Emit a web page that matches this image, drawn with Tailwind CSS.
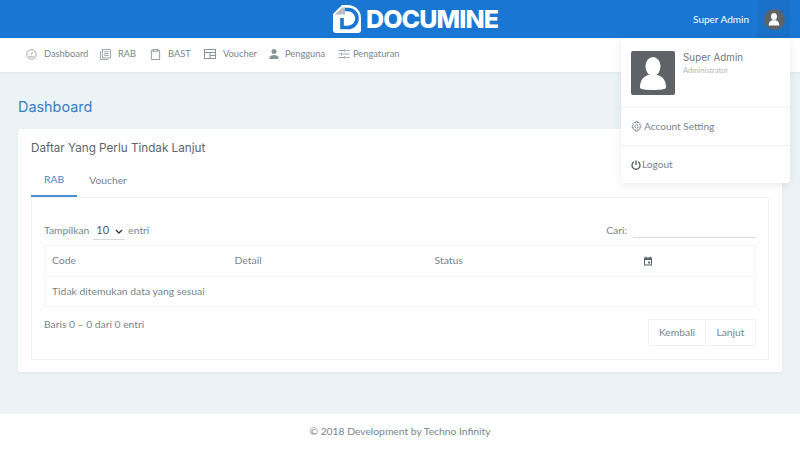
<!DOCTYPE html>
<html lang="en">
  <head>
    <meta charset="UTF-8" />
    <meta name="viewport" content="width=device-width, initial-scale=1.0" />
    <title>Documine</title>
    <script src="https://cdn.jsdelivr.net/npm/@tailwindcss/browser@4"></script>
  </head>
  <body class="font-['Lato',sans-serif] bg-[#ecf3f7] text-[#78858c]">
    <div class="relative w-[800px] h-[450px] overflow-hidden flex flex-col">
      <!-- Header -->
      <header class="h-[38px] shrink-0 bg-[#1976d2] flex items-center relative">
        <div class="absolute left-[333px] top-[5px] flex items-center gap-[5px]">
          <svg class="w-[28px] h-[28px]" viewBox="0 0 28 28">
            <path d="M9 0H15A13 13 0 0 1 28 13V25a3 3 0 0 1-3 3H3a3 3 0 0 1-3-3V9z" fill="#fff" />
            <path d="M9.500 2 2 9.500H9.500z" fill="#b5b8bc" />
            <path d="M11 4.500h4A9 9 0 0 1 15 22.500H9V13" fill="none" stroke="#1976d2" stroke-width="3.600" />
            <path d="M9.500 2.500H12V9.500H9.500z" fill="#b5b8bc" />
          </svg>
          <span class="font-['Inter',sans-serif] font-extrabold text-[25px] leading-[28px] text-white tracking-[-0.9px]">DOCUMINE</span>
        </div>
        <div class="ml-auto flex items-center h-full">
          <span class="text-white text-[10px] mr-[9px]">Super Admin</span>
          <div class="w-[32px] h-full bg-[#1a6fc6] flex items-center justify-center mr-[10px]">
            <div class="w-[21px] h-[21px] rounded-full bg-[#5f6368] flex items-center justify-center overflow-hidden">
              <svg class="w-[14px] h-[14px]" viewBox="0 0 24 24" fill="#fff">
                <ellipse cx="12" cy="7.500" rx="5" ry="6" />
                <path d="M3 23c0-6 3-8 6-9h6c3 1 6 3 6 9z" />
              </svg>
            </div>
          </div>
        </div>
      </header>

      <!-- Nav -->
      <nav class="h-[34px] shrink-0 bg-white shadow-[0_1px_3px_rgba(0,0,0,0.06)] flex items-center pl-[26px] pb-[2px] text-[9.300px] text-[#78858c]">
        <a class="flex items-center gap-[7px] w-[74px]">
          <svg class="w-[11px] h-[11px] shrink-0" viewBox="0 0 12 12" fill="none" stroke="#8a959b" stroke-width="0.900">
            <circle cx="6" cy="6" r="5.200" />
            <path d="M6 6.500 7 3M3 8.500h6" />
          </svg>
          Dashboard
        </a>
        <a class="flex items-center gap-[7px] w-[50px]">
          <svg class="w-[11px] h-[11px] shrink-0" viewBox="0 0 12 12" fill="none" stroke="#8a959b" stroke-width="0.900">
            <rect x="2.500" y="0.700" width="9" height="9" />
            <path d="M0.500 2.500v9h9M4.500 3h5M4.500 5h5M4.500 7h5" />
          </svg>
          RAB
        </a>
        <a class="flex items-center gap-[7px] w-[54px]">
          <svg class="w-[11px] h-[11px] shrink-0" viewBox="0 0 12 12" fill="none" stroke="#8a959b" stroke-width="1">
            <path d="M3.500 1.500H1.500v10h9v-10H8.500" />
            <rect x="3.500" y="0.500" width="5" height="2" />
          </svg>
          BAST
        </a>
        <a class="flex items-center gap-[7px] w-[64px]">
          <svg class="w-[12px] h-[12px] shrink-0" viewBox="0 0 12 12" fill="none" stroke="#8a959b" stroke-width="1">
            <rect x="0.500" y="1.500" width="11" height="9" />
            <path d="M0.500 4.500h11M6 4.500v6M6 7.500h5.500" />
          </svg>
          Voucher
        </a>
        <a class="flex items-center gap-[5px] w-[70px]">
          <svg class="w-[12px] h-[12px] shrink-0" viewBox="0 0 12 12" fill="#8a959b">
            <circle cx="6" cy="3.500" r="2.500" />
            <path d="M1.500 11V9.500C1.500 8 4 7 6 7s4.500 1 4.500 2.500V11z" />
          </svg>
          Pengguna
        </a>
        <a class="flex items-center gap-[3px]">
          <svg class="w-[12px] h-[12px] shrink-0" viewBox="0 0 12 12" fill="none" stroke="#8a959b" stroke-width="0.900">
            <path d="M0.500 2.500h6M8.500 2.500h3M7 1v3M0.500 6h2M4.500 6h7M3.500 4.500v3M0.500 9.500h6M8.500 9.500h3M7 8v3" />
          </svg>
          Pengaturan
        </a>
      </nav>

      <!-- Content -->
      <main class="flex-1 px-[18px] pt-[27px]">
        <h1 class="font-['Inter',sans-serif] text-[14.400px] leading-[16px] text-[#3a7dc2] mb-[14px]">Dashboard</h1>
        <section class="bg-white rounded-[2px] shadow-[0_1px_3px_rgba(0,0,0,0.05)] px-[13px] pt-[12px] pb-[12px] h-[243px] flex flex-col">
          <h2 class="font-['Inter',sans-serif] text-[11.700px] leading-[14px] text-[#5a666d]">Daftar Yang Perlu Tindak Lanjut</h2>
          <div class="flex mt-[9px] h-[33px] text-[10.300px]">
            <a class="w-[46px] flex items-center justify-center text-[#4a86c5] border-b-2 border-[#4a90d6] h-[33px]">RAB</a>
            <a class="w-[62px] flex items-center justify-center">Voucher</a>
          </div>
          <div class="border border-[#f0f2f4] flex-1 px-[12px] pt-[22px]">
            <div class="flex justify-between items-start h-[20px] text-[10.300px]">
              <div class="flex items-center pt-[2px]">
                Tampilkan
                <span class="w-[32px] h-[18px] ml-[4px] mr-[3px] border-b border-[#d5d9dc] flex items-center justify-between text-[11px] text-[#4f5b62] pl-[3px] pr-[2px]">
                  10
                  <svg class="w-[8px] h-[8px]" viewBox="0 0 8 8" fill="none" stroke="#333" stroke-width="1.300"><path d="M1 3l3 3 3-3" /></svg>
                </span>
                entri
              </div>
              <div class="flex items-end h-[18px]">
                Cari:
                <span class="w-[123px] h-[18px] ml-[6px] border-b border-[#d5d9dc]"></span>
              </div>
            </div>
            <table class="w-[712px] mt-[5px] border border-[#f3f5f6] text-[10.400px] border-collapse">
              <tbody>
                <tr class="h-[31px] border-b border-[#f3f5f6]">
                  <td class="pl-[7px] w-[190px]">Code</td>
                  <td class="w-[199px]">Detail</td>
                  <td class="w-[209px] pl-[1px]">Status</td>
                  <td>
                    <svg class="w-[10px] h-[10px]" viewBox="0 0 10 10" fill="#55636b">
                      <path d="M1 1.500h1.500V.5h1v1h3V.5h1v1H9V9.500H1zM2 4v4.500h6V4z" />
                      <rect x="5.200" y="5.500" width="2" height="2" />
                    </svg>
                  </td>
                </tr>
                <tr class="h-[30px]">
                  <td class="pl-[7px]" colspan="4">Tidak ditemukan data yang sesuai</td>
                </tr>
              </tbody>
            </table>
            <div class="flex justify-between mt-[12px] text-[10.300px]">
              <span class="leading-[14px] -mt-[2px]">Baris 0 – 0 dari 0 entri</span>
              <div class="flex">
                <span class="h-[27px] w-[58px] border border-[#f0f2f4] flex items-center justify-center">Kembali</span>
                <span class="h-[27px] w-[50px] border border-l-0 border-[#f0f2f4] flex items-center justify-center">Lanjut</span>
              </div>
            </div>
          </div>
        </section>
      </main>

      <!-- Footer -->
      <footer class="h-[36px] shrink-0 bg-white flex items-center justify-center text-[10.300px] pb-[1px]">© 2018 Development by Techno Infinity</footer>

      <!-- Dropdown -->
      <div class="absolute left-[621px] top-[38px] w-[169px] h-[145px] bg-white rounded-b-[3px] shadow-[0_2px_8px_rgba(0,0,0,0.08)] flex flex-col">
        <div class="h-[70px] border-b border-[#f1f3f5] flex pl-[10px] pt-[13px]">
          <div class="w-[44px] h-[44px] bg-[#5f6368] rounded-[2px] flex items-center justify-center overflow-hidden">
            <svg class="w-[36px] h-[36px]" viewBox="0 0 36 36" fill="#fff">
              <ellipse cx="18" cy="11.500" rx="7.500" ry="9.500" />
              <path d="M5 33c0-5 1-10 8-13h10c7 3 8 8 8 13 0 1-6 2-13 2S5 34 5 33z" />
            </svg>
          </div>
          <div class="ml-[8px]">
            <p class="font-['Inter',sans-serif] text-[9.700px] leading-[12px] mt-[1px] text-[#6b777d] tracking-[0.1px]">Super Admin</p>
            <p class="text-[7.500px] leading-[10px] mt-[2px] text-[#b0b9be]">Administrator</p>
          </div>
        </div>
        <div class="h-[38px] border-b border-[#eef1f3] flex items-center pl-[10px] gap-[2px] text-[10.100px]">
          <svg class="w-[11px] h-[11px]" viewBox="0 0 12 12" fill="none" stroke="#67757c" stroke-width="0.800">
            <circle cx="6" cy="6" r="1.800" />
            <path d="M5 .7h2l.3 1.500 1.300-.7L10 3l-.8 1.200 1.500.8v2l-1.500.3.800 1.500-1.400 1.400-1.300-.8-.3 1.600H5l-.3-1.600-1.300.8L2 8.800l.8-1.500L1.300 7V5l1.500-.8L2 3l1.400-1.500 1.300.7z" />
          </svg>
          Account Setting
        </div>
        <div class="flex-1 flex items-center pl-[10px] gap-[1px] text-[10.100px]">
          <svg class="w-[10px] h-[10px]" viewBox="0 0 10 10" fill="none" stroke="#4f5b62" stroke-width="1.300">
            <path d="M5 .5v4.500M3 1.800a4 4 0 1 0 4 0" />
          </svg>
          Logout
        </div>
      </div>
    </div>
  </body>
</html>
